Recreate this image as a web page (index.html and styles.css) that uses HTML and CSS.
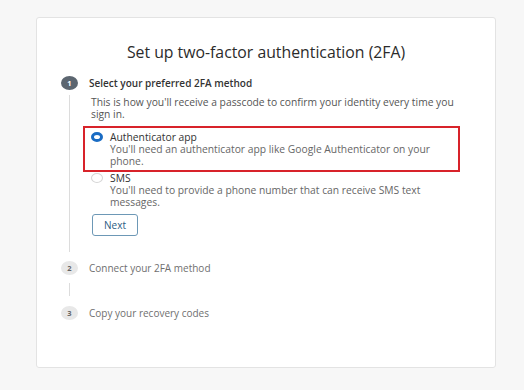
FILE: index.html
```html
<!DOCTYPE html>
<html lang="en">
<head>
    <meta charset="UTF-8">
    <meta name="viewport" content="width=device-width, initial-scale=1.0">
    <title>Set up two-factor authentication</title>
    <link rel="stylesheet" href="styles.css">
</head>
<body>
    <div class="card">
        <h1>Set up two-factor authentication (2FA)</h1>

        <ol class="steps">
            <li class="step active">
                <span class="marker">1</span>
                <span class="step-title">Select your preferred 2FA method</span>
                <span class="rail"></span>
                <div class="step-body">
                    <p class="step-desc">This is how you'll receive a passcode to confirm your identity every time you sign in.</p>

                    <label class="option highlight">
                        <span class="radio checked"></span>
                        <span class="option-text">
                            <span class="option-name">Authenticator app</span>
                            <span class="option-desc">You'll need an authenticator app like Google Authenticator on your phone.</span>
                        </span>
                    </label>
                    <label class="option">
                        <span class="radio"></span>
                        <span class="option-text">
                            <span class="option-name">SMS</span>
                            <span class="option-desc">You'll need to provide a phone number that can receive SMS text messages.</span>
                        </span>
                    </label>

                    <button type="button" class="next-button">Next</button>
                </div>
            </li>
            <li class="step">
                <span class="marker">2</span>
                <span class="step-title">Connect your 2FA method</span>
                <span class="rail short"></span>
                <div class="step-body"></div>
            </li>
            <li class="step">
                <span class="marker">3</span>
                <span class="step-title">Copy your recovery codes</span>
            </li>
        </ol>
    </div>
</body>
</html>
```

FILE: styles.css
```css
body {
    margin: 0;
    background-color: #f7f7f7;
    font-family: "Open Sans", "Liberation Sans", sans-serif;
    color: #333;
}

.card {
    box-sizing: border-box;
    width: 460px;
    height: 351px;
    margin: 17px 0 0 36px;
    padding-top: 24px;
    background-color: #ffffff;
    border: 1px solid #e3e3e3;
    border-radius: 3px;
}

h1 {
    margin: 0;
    font-size: 15.8px;
    line-height: 20px;
    font-weight: 500;
    text-align: center;
    color: #2b2b2b;
}

.steps {
    list-style: none;
    margin: 13px 0 0 0;
    padding: 0 40px 0 24px;
}

.step {
    display: grid;
    grid-template-columns: 16px 1fr;
    column-gap: 12px;
    align-items: center;
}

.marker {
    width: 17px;
    height: 14px;
    border-radius: 50%;
    background-color: #e8e8e8;
    color: #666;
    font-size: 7.5px;
    font-weight: 700;
    line-height: 14px;
    text-align: center;
}

.active .marker {
    background-color: #5c6670;
    color: #ffffff;
}

.step-title {
    font-size: 10px;
    line-height: 16px;
    color: #6f6f6f;
}

.active .step-title {
    font-weight: 600;
    color: #333;
}

.rail {
    align-self: stretch;
    justify-self: center;
    width: 1px;
    margin: 4px 0 8px 0;
    background-color: #dcdcdc;
}

.rail.short {
    margin: 7px 0 7px 0;
    height: 13px;
}

.step-body {
    padding: 5px 0 24px 0;
    font-size: 10.3px;
    line-height: 12px;
}

.step-desc {
    margin: 0 0 11px 2px;
    color: #555;
}

.option {
    display: grid;
    grid-template-columns: 11px 1fr;
    column-gap: 8px;
    margin-left: -1px;
    padding-left: 3px;
}

.option + .option {
    margin-top: 5px;
}

.highlight {
    outline: 2px solid #d8232a;
    outline-offset: 3px;
}

.radio {
    box-sizing: border-box;
    width: 12px;
    height: 10px;
    margin-top: 1px;
    border: 1px solid #d6d6d6;
    border-radius: 50%;
    background-color: #fff;
}

.radio.checked {
    border: 3.5px solid #1a6cc4;
    background-color: #fff;
}

.option-name {
    display: block;
    color: #333;
}

.option-desc {
    display: block;
    color: #666;
}

.next-button {
    box-sizing: border-box;
    width: 46px;
    height: 22px;
    margin: 6px 0 0 3px;
    padding: 0;
    background-color: #fff;
    border: 1px solid #6d98b6;
    border-radius: 3px;
    font-family: inherit;
    font-size: 10px;
    color: #2d5c82;
}
```
